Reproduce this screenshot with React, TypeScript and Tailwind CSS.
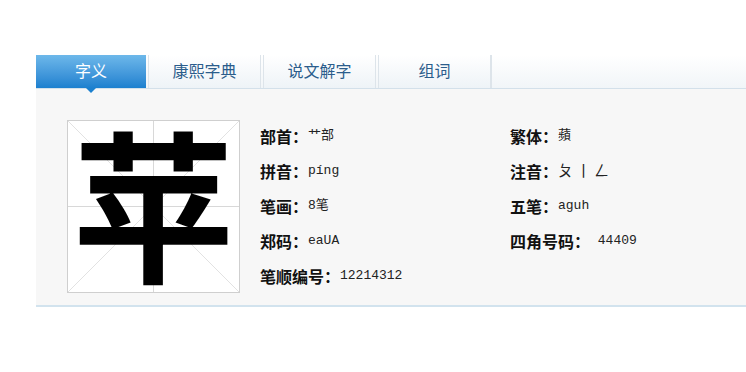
import React from 'react';

const cjk = '"Noto Sans CJK SC", "Liberation Sans", sans-serif';
const mono = '"Liberation Mono", "Noto Sans CJK SC", monospace';

const tabs = ['字义', '康熙字典', '说文解字', '组词'];

const leftRows = [
    { label: '部首：', value: '艹部' },
    { label: '拼音：', value: 'píng' },
    { label: '笔画：', value: '8笔' },
    { label: '郑码：', value: 'eaUA' },
    { label: '笔顺编号：', value: '12214312' },
];

const rightRows = [
    { label: '繁体：', value: '蘋' },
    { label: '注音：', value: 'ㄆ丨ㄥ', big: true },
    { label: '五笔：', value: 'aguh' },
    { label: '四角号码：', value: ' 44409' },
];

function Row({ label, value, big }: { label: string; value: string; big?: boolean }) {
    return (
        <div className="flex items-center h-[35px]">
            <span className="text-[16px] font-bold text-[#111]" style={{ fontFamily: cjk }}>{label}</span>
            <span
                className={big ? 'text-[15px] text-[#222] tracking-[3px]' : 'text-[13px] text-[#222] whitespace-pre'}
                style={{ fontFamily: big ? cjk : mono }}
            >
                {value}
            </span>
        </div>
    );
}

export default function App() {
    return (
        <div className="w-[746px] h-[372px] bg-white pt-[55px] pl-[36px]">
            {/* tab strip */}
            <div className="flex h-[34px] border-b border-[#d3e0ea] bg-gradient-to-b from-white to-[#f1f5f8]">
                {tabs.map((t, i) =>
                    i === 0 ? (
                        <div key={t} className="relative w-[110px] flex items-center justify-center pb-[3px] bg-gradient-to-b from-[#6db8ea] to-[#1b80cf] text-white text-[16px]" style={{ fontFamily: cjk }}>
                            {t}
                            <span className="absolute left-1/2 -translate-x-1/2 top-full w-0 h-0 border-l-[5px] border-r-[5px] border-t-[5px] border-l-transparent border-r-transparent border-t-[#1b80cf]" />
                        </div>
                    ) : (
                        <div key={t} className="w-[113px] ml-[2px] flex items-center justify-center pb-[3px] border-x border-[#dde4ea] bg-gradient-to-b from-white to-[#eef3f7] text-[#2b5d8c] text-[16px]" style={{ fontFamily: cjk }}>
                            {t}
                        </div>
                    )
                )}
                <div className="flex-1 border-l border-[#dde4ea]" />
            </div>

            {/* content panel */}
            <div className="h-[218px] bg-[#f7f7f7] border-b-2 border-[#d2e3ee] flex pt-[31px] pl-[31px]">
                <div className="relative w-[173px] h-[173px] bg-white border border-[#cfcfcf] flex items-center justify-center">
                    <svg className="absolute inset-0" width="171" height="171">
                        <line x1="0" y1="0" x2="171" y2="171" stroke="#e2e2e2" strokeWidth="1" />
                        <line x1="171" y1="0" x2="0" y2="171" stroke="#e2e2e2" strokeWidth="1" />
                        <line x1="85.5" y1="0" x2="85.5" y2="171" stroke="#d8d8d8" strokeWidth="1" />
                        <line x1="0" y1="85.5" x2="171" y2="85.5" stroke="#d8d8d8" strokeWidth="1" />
                    </svg>
                    <span className="relative -mt-[14px] text-[162px] leading-none font-bold text-black" style={{ fontFamily: '"Noto Sans CJK SC", serif' }}>苹</span>
                </div>

                <div className="ml-[20px] -mt-[2px] w-[250px]">
                    {leftRows.map(r => <Row key={r.label} {...r} />)}
                </div>
                <div className="-mt-[2px]">
                    {rightRows.map(r => <Row key={r.label} {...r} />)}
                </div>
            </div>
        </div>
    );
}
